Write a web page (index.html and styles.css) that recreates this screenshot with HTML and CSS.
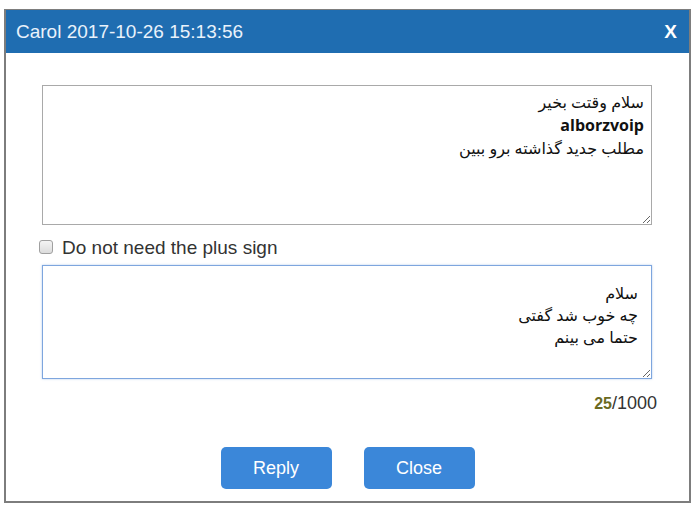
FILE: index.html
```html
<!DOCTYPE html>
<html lang="en">

<head>
    <meta charset="UTF-8">
    <meta name="viewport" content="width=device-width, initial-scale=1.0">
    <title>Reply Message</title>
    <link rel="stylesheet" href="styles.css">
</head>

<body>
    <div class="dialog">
        <!-- Title bar with sender, time and close cross -->
        <div class="dialog-header">
            <span class="dialog-title">Carol 2017-10-26 15:13:56</span>
            <span class="dialog-close">X</span>
        </div>

        <div class="dialog-body">
            <!-- Received message -->
            <div class="message-box">
                سلام وقتت بخیر<br>
                <b>alborzvoip</b><br>
                مطلب جدید گذاشته برو ببین
            </div>

            <label class="check-row">
                <input type="checkbox" class="check">
                <span>Do not need the plus sign</span>
            </label>

            <!-- Reply text -->
            <textarea class="reply-box">سلام
چه خوب شد گفتی
حتما می بینم</textarea>

            <div class="counter"><span class="count">25</span>/1000</div>

            <div class="button-group">
                <button class="btn">Reply</button>
                <button class="btn">Close</button>
            </div>
        </div>
    </div>
</body>

</html>
```

FILE: styles.css
```css
* {
    box-sizing: border-box;
}

body {
    margin: 0;
    background: #fff;
    font-family: "Liberation Sans", Arial, sans-serif;
}

.dialog {
    width: 687px;
    height: 494px;
    margin: 9px 0 0 4px;
    border: 2px solid #7d7d7d;
    border-top-width: 1px;
    display: flex;
    flex-direction: column;
    background: #fff;
}

.dialog-header {
    height: 43px;
    background: #1f6db1;
    display: flex;
    align-items: center;
    justify-content: space-between;
    padding: 0 12px 0 10px;
    color: #e9f2fb;
}

.dialog-title {
    font-size: 19px;
}

.dialog-close {
    font-size: 19px;
    font-weight: 700;
    color: #fff;
}

.dialog-body {
    flex: 1;
    padding: 32px 33px 0 36px;
    display: flex;
    flex-direction: column;
}

.message-box,
.reply-box {
    width: 610px;
    font-family: "Open Sans", "DejaVu Sans", sans-serif;
    font-size: 16px;
    line-height: 23px;
    color: #111;
    text-align: right;
    resize: vertical;
    overflow: auto;
    margin: 0;
}

.message-box {
    height: 140px;
    border: 1px solid #a9a9a9;
    padding: 5px 7px;
}

.check-row {
    display: flex;
    align-items: center;
    height: 40px;
    padding-top: 6px;
    margin-left: -3px;
    font-size: 19px;
    color: #333;
}

/* old-style grey checkbox */
.check {
    appearance: none;
    width: 14px;
    height: 14px;
    margin: 0 9px 2px 0;
    border: 1px solid #a0a0a0;
    border-radius: 3px;
    background: linear-gradient(#f4f4f4, #dcdcdc);
}

.reply-box {
    height: 114px;
    border: 1px solid #7ea6de;
    box-shadow: 0 0 2px rgba(126, 166, 222, 0.6);
    padding: 16px 13px 4px;
    line-height: 22px;
    outline: none;
    background: #fff;
}

.counter {
    width: 615px;
    text-align: right;
    font-size: 18px;
    color: #333;
    margin-top: 14px;
}

.count {
    color: #6b6a1f;
    font-weight: 700;
    font-size: 16px;
}

.button-group {
    display: flex;
    justify-content: center;
    gap: 32px;
    margin-top: 33px;
    margin-left: -36px;
    margin-right: -33px;
}

.btn {
    width: 111px;
    height: 42px;
    border: none;
    border-radius: 5px;
    background: #3b87d9;
    color: #fff;
    font-family: "Liberation Sans", Arial, sans-serif;
    font-size: 18px;
    cursor: pointer;
}
```
